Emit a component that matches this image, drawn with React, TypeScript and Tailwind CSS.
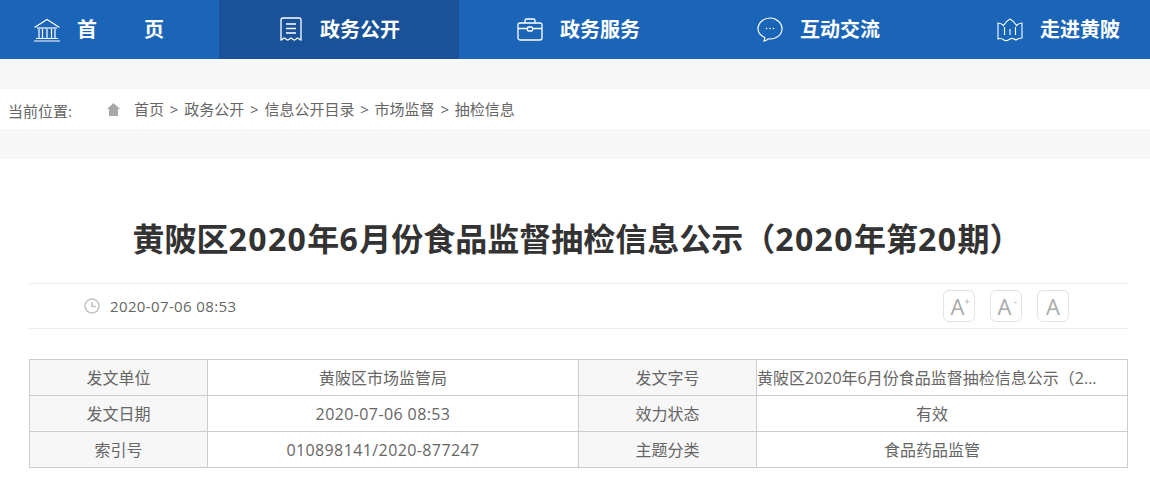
import React from 'react';

const font = 'font-["Open_Sans","Noto_Sans_CJK_SC",sans-serif]';

const BankIcon = () => (
    <svg width="28" height="24" viewBox="0 0 28 24" fill="none" stroke="white" strokeWidth="1.2">
        <path d="M1.500 9.500 14 1.500l12.500 8" />
        <path d="M4 10h20" />
        <path d="M6 11v9M9.500 11v9M14 11v9M18.500 11v9M22 11v9" />
        <path d="M3 20.500h22M1 23h26" />
    </svg>
);

const ReceiptIcon = () => (
    <svg className="ml-[3px]" width="22" height="25" viewBox="0 0 22 25" fill="none" stroke="white" strokeWidth="1.3">
        <path d="M1 23V3a2 2 0 0 1 2-2h16a2 2 0 0 1 2 2v20c-1.700 0-1.700-1.800-3.300-1.800S16 23 14.300 23s-1.700-1.800-3.300-1.800S9.400 23 7.700 23 6 21.200 4.300 21.200 2.700 23 1 23Z" />
        <path d="M6 7h10M6 11.500h10M6 16h10" />
    </svg>
);

const CaseIcon = () => (
    <svg width="26" height="23" viewBox="0 0 26 23" fill="none" stroke="white" strokeWidth="1.3">
        <rect x="1" y="5" width="24" height="17" rx="2" />
        <path d="M8 5V2.500A1.500 1.500 0 0 1 9.500 1h7A1.500 1.500 0 0 1 18 2.500V5" />
        <path d="M1 10.500h9M16 10.500h9" />
        <rect x="10.500" y="9" width="5" height="4" rx="1" />
    </svg>
);

const ChatIcon = () => (
    <svg width="26" height="25" viewBox="0 0 26 25" fill="none" stroke="white" strokeWidth="1.2">
        <path d="M13 1c6.600 0 12 4.900 12 10.800S19.600 22 13 22c-.6 0-1.200 0-1.800-.1C10 23.200 8.500 24 6.800 24c.7-1 1-2.300.9-3.600C3.700 18.600 1 15.400 1 11.800 1 5.900 6.400 1 13 1Z" />
        <circle cx="9.500" cy="11.500" r=".8" fill="white" stroke="none" />
        <circle cx="13" cy="11.500" r=".8" fill="white" stroke="none" />
        <circle cx="16.500" cy="11.500" r=".8" fill="white" stroke="none" />
    </svg>
);

const MapIcon = () => (
    <svg width="26" height="24" viewBox="0 0 26 24" fill="none" stroke="white" strokeWidth="1.1">
        <path d="M1 5c2.500 0 4 1 5.500 2.500C8 5 10 2.500 13 1c3 1.500 5 4 6.500 6.500C21 6 22.500 5 25 5v15c-2.500 0-4 .5-6 2-2-1.500-4-2.500-6-1s-4 2.500-6 1c-2-1.500-3.500-2-6-1Z" />
        <path d="M7.500 9v8M13 11v6M18.500 9v8" />
    </svg>
);

const HomeGlyph = () => (
    <svg width="13" height="13" viewBox="0 0 13 13" fill="#a8a8a8">
        <path d="M6.500 0 13 6h-2v7H2V6H0Z" />
    </svg>
);

const ClockIcon = () => (
    <svg width="16" height="16" viewBox="0 0 16 16" fill="none" stroke="#c4c4c4" strokeWidth="1.600">
        <circle cx="8" cy="8" r="7" />
        <path d="M8 4v4.500h4" />
    </svg>
);

const navItems = [
    { label: '政务公开', icon: <ReceiptIcon />, active: true },
    { label: '政务服务', icon: <CaseIcon /> },
    { label: '互动交流', icon: <ChatIcon /> },
    { label: '走进黄陂', icon: <MapIcon /> },
];

const crumbs = ['首页', '政务公开', '信息公开目录', '市场监督', '抽检信息'];

const rows = [
    ['发文单位', '黄陂区市场监管局', '发文字号', '黄陂区2020年6月份食品监督抽检信息公示（2020年第20期）'],
    ['发文日期', '2020-07-06 08:53', '效力状态', '有效'],
    ['索引号', '010898141/2020-877247', '主题分类', '食品药品监管'],
];

const FontButton = ({ sup }: { sup?: string }) => (
    <div className="w-8 h-8 rounded-md border border-[#e2e2e2] flex items-center justify-center relative text-[#aaaaaa] text-[22px] leading-none">
        <span className={sup ? '-ml-[3px]' : ''}>A</span>
        {sup && <span className="absolute right-[4px] top-[5px] text-[10px] leading-none">{sup}</span>}
    </div>
);

const Num = ({ children }: { children: React.ReactNode }) => (
    <span className="tracking-[0.045em]">{children}</span>
);

export default function App() {
    return (
        <div className={`${font} bg-white h-[504px] overflow-hidden text-[#666666]`}>
            {/* Nav */}
            <nav className="h-[59px] bg-[#1b65b9] flex text-white font-bold text-[20px] overflow-hidden">
                <div className="w-[219px] shrink-0 flex items-center pl-[33px]">
                    <BankIcon />
                    <span className="ml-[16px]">首</span>
                    <span className="ml-[47px]">页</span>
                </div>
                {navItems.map((item) => (
                    <div
                        key={item.label}
                        className={`w-[240px] shrink-0 flex items-center pl-[58px] ${item.active ? 'bg-[#195298]' : ''}`}
                    >
                        <div className="w-[43px] shrink-0">{item.icon}</div>
                        <span className="whitespace-nowrap">{item.label}</span>
                    </div>
                ))}
            </nav>

            <div className="h-[30px] bg-[#f7f7f7]" />

            {/* Breadcrumb */}
            <div className="h-[40px] flex items-center text-[15px] pl-[8px]">
                <span className="w-[99px] pt-[4px]">当前位置:</span>
                <HomeGlyph />
                <div className="flex ml-[14px] gap-[5.800px]">
                    {crumbs.map((c, i) => (
                        <React.Fragment key={c}>
                            {i > 0 && <span>&gt;</span>}
                            <span>{c}</span>
                        </React.Fragment>
                    ))}
                </div>
            </div>

            <div className="h-[30px] bg-[#f7f7f7]" />

            {/* Title */}
            <h1 className="h-[124px] flex items-center justify-center font-bold text-[32px] text-[#333333] whitespace-nowrap pt-[36px] pl-[4px]">
                <span>黄陂区<Num>2020</Num>年<Num>6</Num>月份食品监督抽检信息公示（<Num>2020</Num>年第<Num>20</Num>期）</span>
            </h1>

            {/* Meta */}
            <div className="mx-[29px] w-[1100px] h-[46px] border-y border-[#eeeeee] flex items-center justify-between pl-[55px] pr-[60px] text-[15px]">
                <div className="flex items-center gap-[10px]">
                    <ClockIcon />
                    <span className="tracking-[0.025em]">2020-07-06 08:53</span>
                </div>
                <div className="flex gap-[15px]">
                    <FontButton sup="+" />
                    <FontButton sup="-" />
                    <FontButton />
                </div>
            </div>

            {/* Info table */}
            <div className="mt-[30px] ml-[29px] w-[1099px] border border-[#cccccc] border-b-0 text-[16px]">
                {rows.map((row) => (
                    <div key={row[0]} className="grid grid-cols-[178px_371px_178px_370px] h-[36px] border-b border-[#cccccc]">
                        {row.map((cell, i) => (
                            <div
                                key={i}
                                className={`flex items-center min-w-0 ${cell.length > 25 ? 'justify-start' : 'justify-center'} ${i % 2 === 0 ? 'bg-[#f7f7f7]' : 'pr-[20px]'} ${i < 3 ? 'border-r border-[#cccccc]' : ''}`}
                            >
                                <span className={`truncate max-w-[342px] ${/^\d/.test(cell) ? 'tracking-[0.025em]' : ''}`}>{cell}</span>
                            </div>
                        ))}
                    </div>
                ))}
            </div>
        </div>
    );
}
